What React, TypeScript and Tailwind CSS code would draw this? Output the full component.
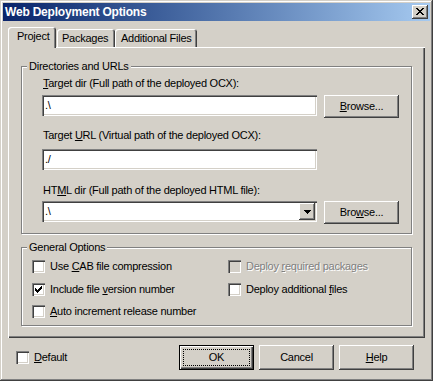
import React from "react";

const SUNKEN =
  "shadow-[inset_1px_1px_0_#808080,inset_2px_2px_0_#404040,inset_-1px_-1px_0_#ffffff,inset_-2px_-2px_0_#d4d0c8]";
const RAISED =
  "shadow-[inset_-1px_-1px_0_#404040,inset_1px_1px_0_#ffffff,inset_-2px_-2px_0_#808080,inset_2px_2px_0_#d4d0c8]";

function CheckMark() {
  return (
    <svg width="7" height="7" viewBox="0 0 7 7" shapeRendering="crispEdges">
      <path
        fill="#000"
        d="M6 0h1v1h-1z M5 1h2v1h-2z M0 2h1v1h-1z M4 2h3v1h-3z M0 3h2v1h-2z M3 3h3v1h-3z M0 4h5v1h-5z M1 5h3v1h-3z M2 6h1v1h-1z"
      />
    </svg>
  );
}

function Box({ checked = false, disabled = false }: { checked?: boolean; disabled?: boolean }) {
  return (
    <div
      className={`w-[13px] h-[13px] shrink-0 flex items-center justify-center ${SUNKEN} ${
        disabled ? "bg-[#d4d0c8]" : "bg-white"
      }`}
    >
      {checked && <CheckMark />}
    </div>
  );
}

function CheckRow({
  children,
  checked,
  disabled,
  className = "",
}: {
  children: React.ReactNode;
  checked?: boolean;
  disabled?: boolean;
  className?: string;
}) {
  return (
    <div className={`flex items-center gap-[5px] h-[13px] ${className}`}>
      <Box checked={checked} disabled={disabled} />
      <span
        className={`whitespace-nowrap ${
          disabled ? "text-[#808080] [text-shadow:1px_1px_0_#ffffff]" : ""
        }`}
      >
        {children}
      </span>
    </div>
  );
}

function Button({
  children,
  className = "",
  w = "w-[75px] h-[23px]",
}: {
  children: React.ReactNode;
  className?: string;
  w?: string;
}) {
  return (
    <div className={`${w} ${RAISED} bg-[#d4d0c8] flex items-center justify-center shrink-0 ${className}`}>
      <span className="whitespace-nowrap">{children}</span>
    </div>
  );
}

function Field({ value }: { value: string }) {
  return (
    <div className={`w-[275px] h-[21px] bg-white ${SUNKEN} pl-[3px] flex items-center shrink-0`}>
      <span>{value}</span>
    </div>
  );
}

export default function App() {
  return (
    <div className="w-[433px] h-[381px] bg-[#d4d0c8] p-[3px] flex flex-col shadow-[inset_-1px_-1px_0_#404040,inset_1px_1px_0_#d4d0c8,inset_-2px_-2px_0_#808080,inset_2px_2px_0_#ffffff] font-['Liberation_Sans',Arial,sans-serif] text-[11px] leading-[13px] tracking-[-0.25px] text-black">
      {/* Title bar */}
      <div className="h-[18px] flex items-start bg-linear-to-r from-[#0a246a] to-[#a6caf0] shrink-0">
        <span className="flex-1 pl-[2px] text-white font-bold text-[12px] leading-[18px] tracking-[-0.2px] whitespace-nowrap">
          Web Deployment Options
        </span>
        <div className={`mt-[2px] mr-[2px] w-[16px] h-[14px] bg-[#d4d0c8] ${RAISED} flex items-center justify-center`}>
          <svg width="8" height="7" viewBox="0 0 8 7" shapeRendering="crispEdges" className="-mt-[1px] -ml-[1px]">
            <path
              fill="#000"
              d="M0 0h2v1h-2z M6 0h2v1h-2z M1 1h2v1h-2z M5 1h2v1h-2z M2 2h4v1h-4z M3 3h2v1h-2z M2 4h4v1h-4z M1 5h2v1h-2z M5 5h2v1h-2z M0 6h2v1h-2z M6 6h2v1h-2z"
            />
          </svg>
        </div>
      </div>

      {/* Tabs */}
      <div className="mt-[6px] ml-[5px] h-[20px] flex items-end shrink-0">
        <div className="relative z-10 w-[48px] h-[21px] -mb-[1px] mr-[1px] bg-[#d4d0c8] rounded-t-[3px] shadow-[inset_1px_1px_0_#ffffff,inset_-1px_0_0_#404040,inset_-2px_0_0_#808080] pl-[9px] pt-[3px] whitespace-nowrap">
          Project
        </div>
        <div className="w-[58px] h-[18px] bg-[#d4d0c8] rounded-t-[3px] shadow-[inset_1px_1px_0_#ffffff,inset_-1px_0_0_#404040,inset_-2px_0_0_#808080] pl-[5px] pt-[3px] whitespace-nowrap">
          Packages
        </div>
        <div className="w-[82px] h-[18px] bg-[#d4d0c8] rounded-t-[3px] shadow-[inset_1px_1px_0_#ffffff,inset_-1px_0_0_#404040,inset_-2px_0_0_#808080] pl-[6px] pt-[3px] whitespace-nowrap">
          Additional Files
        </div>
      </div>

      {/* Tab panel */}
      <div className="ml-[5px] w-[417px] h-[291px] shrink-0 bg-[#d4d0c8] shadow-[inset_1px_1px_0_#ffffff,inset_-1px_-1px_0_#404040,inset_-2px_-2px_0_#808080] pt-[19px] pl-[13px]">
        {/* Directories and URLs */}
        <div className="w-[391px] h-[168px] border border-[#808080] shadow-[1px_1px_0_#ffffff,inset_1px_1px_0_#ffffff]">
          <div className="-mt-[7px] ml-[5px] px-[2px] w-fit bg-[#d4d0c8] whitespace-nowrap">Directories and URLs</div>
          <div className="pl-[20px] flex flex-col">
            <div className="mt-[4px] pl-[1px] whitespace-nowrap">
              <u>T</u>arget dir (Full path of the deployed OCX):
            </div>
            <div className="mt-[5px] flex items-start">
              <Field value={".\\"} />
              <Button className="ml-[7px]">
                <u>B</u>rowse...
              </Button>
            </div>
            <div className="mt-[11px] pl-[1px] whitespace-nowrap">
              Target <u>U</u>RL (Virtual path of the deployed OCX):
            </div>
            <div className="mt-[7px] flex">
              <Field value="./" />
            </div>
            <div className="mt-[14px] pl-[1px] whitespace-nowrap">
              HT<u>M</u>L dir (Full path of the deployed HTML file):
            </div>
            <div className="mt-[4px] flex items-start">
              <div className={`w-[275px] h-[21px] bg-white ${SUNKEN} flex items-start shrink-0`}>
                <span className="flex-1 pl-[3px] leading-[21px]">{".\\"}</span>
                <div className={`mt-[2px] mr-[2px] w-[16px] h-[17px] bg-[#d4d0c8] ${RAISED} flex items-center justify-center`}>
                  <svg width="7" height="4" viewBox="0 0 7 4" shapeRendering="crispEdges">
                    <path fill="#000" d="M0 0h7v1h-7z M1 1h5v1h-5z M2 2h3v1h-3z M3 3h1v1h-1z" />
                  </svg>
                </div>
              </div>
              <Button className="ml-[7px]">
                Bro<u>w</u>se...
              </Button>
            </div>
          </div>
        </div>

        {/* General Options */}
        <div className="mt-[13px] w-[391px] h-[79px] border border-[#808080] shadow-[1px_1px_0_#ffffff,inset_1px_1px_0_#ffffff]">
          <div className="-mt-[7px] ml-[5px] px-[2px] w-fit bg-[#d4d0c8] whitespace-nowrap">General Options</div>
          <div className="mt-[6px] pl-[10px] flex">
            <div className="w-[196px] flex flex-col">
              <CheckRow>
                Use <u>C</u>AB file compression
              </CheckRow>
              <CheckRow checked className="mt-[10px]">
                Include file <u>v</u>ersion number
              </CheckRow>
              <CheckRow className="mt-[9px]">
                <u>A</u>uto increment release number
              </CheckRow>
            </div>
            <div className="flex flex-col">
              <CheckRow disabled>
                Deploy <u>r</u>equired packages
              </CheckRow>
              <CheckRow className="mt-[10px]">
                Deploy additional <u>f</u>iles
              </CheckRow>
            </div>
          </div>
        </div>
      </div>

      {/* Bottom row */}
      <div className="mt-[7px] h-[25px] flex items-center shrink-0">
        <div className="ml-[13px]">
          <CheckRow className="gap-[4px]">
            <u>D</u>efault
          </CheckRow>
        </div>
        <div className="ml-auto mr-[16px] flex gap-[5px]">
          <div className="w-[75px] h-[25px] bg-[#d4d0c8] shadow-[inset_0_0_0_1px_#000000,inset_2px_2px_0_#ffffff,inset_-2px_-2px_0_#404040,inset_-3px_-3px_0_#808080] p-[4px] flex">
            <div className="flex-1 border border-dotted border-black flex items-center justify-center">OK</div>
          </div>
          <Button w="w-[75px] h-[25px]">Cancel</Button>
          <Button w="w-[75px] h-[25px]">
            <u>H</u>elp
          </Button>
        </div>
      </div>
    </div>
  );
}
